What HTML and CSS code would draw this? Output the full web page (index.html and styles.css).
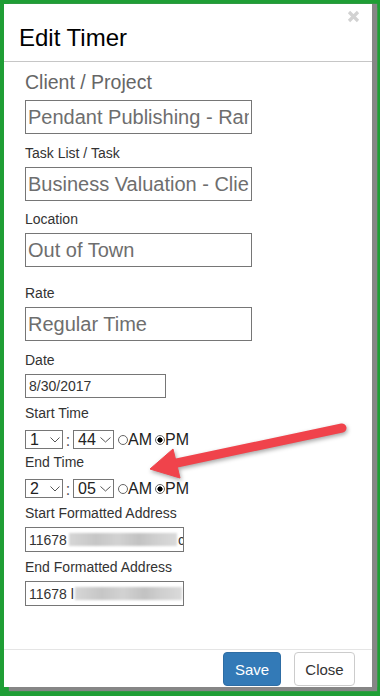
FILE: index.html
```html
<!DOCTYPE html>
<html lang="en">
<head>
  <meta charset="UTF-8" />
  <meta name="viewport" content="width=device-width, initial-scale=1.0" />
  <title>Edit Timer</title>
  <link rel="stylesheet" href="styles.css">
</head>
<body>
  <div class="modal">
    <div class="modal-header">
      <h4 class="modal-title">Edit Timer</h4>
      <svg class="close-x" width="13" height="13" viewBox="0 0 13 13">
        <path d="M2 2 L11 11 M11 2 L2 11" stroke="#d2d2d2" stroke-width="3.2" />
      </svg>
    </div>

    <div class="modal-body">
      <label class="lead-label">Client / Project</label>
      <input type="text" class="big-input mb-11" value="Pendant Publishing - Random House">

      <label>Task List / Task</label>
      <input type="text" class="big-input mb-10" value="Business Valuation - Client Meeting">

      <label>Location</label>
      <input type="text" class="big-input mb-18" value="Out of Town">

      <label>Rate</label>
      <input type="text" class="big-input mb-11" value="Regular Time">

      <label>Date</label>
      <input type="text" class="date-input" value="8/30/2017">

      <label class="mb-9">Start Time</label>
      <div class="time-row mb-5">
        <div class="fake-select hour">
          <span>1</span>
          <svg width="10" height="6" viewBox="0 0 10 6"><path d="M0.5 0.5 L5 5 L9.5 0.5" fill="none" stroke="#555" stroke-width="1" /></svg>
        </div>
        <span class="colon">:</span>
        <div class="fake-select minute">
          <span>44</span>
          <svg width="11" height="6" viewBox="0 0 11 6"><path d="M0.5 0.5 L5.5 5 L10.5 0.5" fill="none" stroke="#555" stroke-width="1" /></svg>
        </div>
        <input type="radio" name="startAmPm" class="ampm"><span>AM</span>
        <input type="radio" name="startAmPm" class="ampm" checked><span>PM</span>
      </div>

      <label class="mb-9">End Time</label>
      <div class="time-row mb-7">
        <div class="fake-select hour">
          <span>2</span>
          <svg width="10" height="6" viewBox="0 0 10 6"><path d="M0.5 0.5 L5 5 L9.5 0.5" fill="none" stroke="#555" stroke-width="1" /></svg>
        </div>
        <span class="colon">:</span>
        <div class="fake-select minute">
          <span>05</span>
          <svg width="11" height="6" viewBox="0 0 11 6"><path d="M0.5 0.5 L5.5 5 L10.5 0.5" fill="none" stroke="#555" stroke-width="1" /></svg>
        </div>
        <input type="radio" name="endAmPm" class="ampm"><span>AM</span>
        <input type="radio" name="endAmPm" class="ampm" checked><span>PM</span>
      </div>

      <label>Start Formatted Address</label>
      <div class="addr-box mb-7">
        <span>11678</span><span class="blurred first"></span><span>c</span>
      </div>

      <label>End Formatted Address</label>
      <div class="addr-box">
        <span>11678 l</span><span class="blurred second"></span>
      </div>
    </div>

    <div class="modal-footer">
      <button class="btn btn-save">Save</button>
      <button class="btn btn-close">Close</button>
    </div>
  </div>

  <svg class="arrow" width="380" height="696" viewBox="0 0 380 696">
    <g fill="#f0434b" stroke="#f0434b">
      <line x1="172" y1="464" x2="342" y2="428" stroke-width="9" stroke-linecap="round" />
      <polygon points="150,469 173,449 180,478" stroke-width="1" stroke-linejoin="round" />
    </g>
  </svg>
</body>
</html>
```

FILE: styles.css
```css
html {
  margin: 0;
}
body {
  margin: 0;
  width: 380px;
  height: 696px;
  box-sizing: border-box;
  padding: 4px 0 0 4px;
  overflow: hidden;
  position: relative;
  background-color: #1f9e35;
  font-family: "Liberation Sans", Arial, sans-serif;
}
.modal {
  width: 368px;
  height: 683px;
  background-color: #ffffff;
  box-shadow: 5px 4px 1px #868686, 5px 0 1px #868686;
  display: flex;
  flex-direction: column;
  overflow: hidden;
}
.modal-header {
  display: flex;
  justify-content: space-between;
  align-items: flex-start;
  padding: 6px 12px 10px 15px;
  border-bottom: 1px solid #c6c6c6;
}
.modal-title {
  margin: 15px 0 0;
  font-size: 24px;
  line-height: 26px;
  font-weight: normal;
  color: #000;
}
.close-x {
  display: block;
}
.modal-body {
  flex: 1;
  padding: 9px 0 0 21px;
}
label {
  display: block;
  font-size: 14px;
  line-height: 16px;
  color: #333;
  margin: 0 0 6px;
}
.lead-label {
  font-size: 19.5px;
  line-height: 23px;
  color: #666;
  margin-bottom: 6px;
}
.big-input {
  display: block;
  box-sizing: border-box;
  width: 227px;
  height: 34px;
  padding: 0 2px;
  border: 1px solid #767676;
  border-radius: 0;
  font-family: "Liberation Sans", Arial, sans-serif;
  font-size: 20px;
  color: #6e6e6e;
  outline: none;
}
.date-input {
  display: block;
  box-sizing: border-box;
  width: 141px;
  height: 24px;
  padding: 0 3px;
  margin-bottom: 7px;
  border: 1px solid #767676;
  border-radius: 0;
  font-family: "Liberation Sans", Arial, sans-serif;
  font-size: 14px;
  color: #333;
}
.mb-5 { margin-bottom: 5px; }
.mb-7 { margin-bottom: 7px; }
.mb-9 { margin-bottom: 9px; }
.mb-10 { margin-bottom: 10px; }
.mb-11 { margin-bottom: 11px; }
.mb-18 { margin-bottom: 18px; }

.time-row {
  display: flex;
  align-items: center;
  height: 19px;
  font-size: 16px;
  color: #222;
}
.fake-select {
  box-sizing: border-box;
  height: 19px;
  border: 1px solid #767676;
  display: flex;
  align-items: center;
  justify-content: space-between;
  padding: 0 2px 0 4px;
  background: #fff;
}
.fake-select svg {
  display: block;
}
.hour {
  width: 38px;
}
.minute {
  width: 41px;
}
.colon {
  width: 10px;
  text-align: center;
  margin-top: 3px;
  color: #555;
}
.ampm {
  -webkit-appearance: none;
  appearance: none;
  width: 10px;
  height: 10px;
  margin: 0 0 0 4px;
  border: 1px solid #666;
  border-radius: 50%;
  background: #fff;
  box-sizing: border-box;
}
.ampm:checked {
  background: radial-gradient(circle, #000 0, #000 2.3px, #fff 2.9px);
}
.ampm + span {
  margin-right: -1px;
}
.addr-box {
  box-sizing: border-box;
  width: 159px;
  height: 25px;
  padding: 0 3px;
  border: 1px solid #767676;
  display: flex;
  align-items: center;
  white-space: nowrap;
  overflow: hidden;
  font-size: 14px;
  color: #333;
}
.blurred {
  display: inline-block;
  height: 13px;
  flex-shrink: 0;
  filter: blur(1px);
  background: linear-gradient(90deg, #d6d6d6, #c6c6c6 25%, #d2d2d2 45%, #c2c2c2 65%, #cfcfcf 80%, #dadada);
}
.blurred.first {
  width: 108px;
  margin: 0 1px 0 2px;
}
.blurred.second {
  width: 107px;
  margin-left: 1px;
}
.modal-footer {
  display: flex;
  justify-content: flex-end;
  gap: 13px;
  padding: 2px 17px 0 0;
  border-top: 1px solid #e5e5e5;
  height: 38px;
  box-sizing: border-box;
}
.btn {
  height: 34px;
  padding: 0;
  border-radius: 4px;
  font-family: "Liberation Sans", Arial, sans-serif;
  font-size: 15px;
  cursor: pointer;
}
.btn-save {
  width: 58px;
  background-color: #337ab7;
  border: 1px solid #2e6da4;
  color: #fff;
}
.btn-close {
  width: 61px;
  background-color: #fff;
  border: 1px solid #ccc;
  color: #333;
}
.arrow {
  position: absolute;
  left: 0;
  top: 0;
  pointer-events: none;
  filter: drop-shadow(1px 2px 2px rgba(0, 0, 0, 0.35));
}
```
